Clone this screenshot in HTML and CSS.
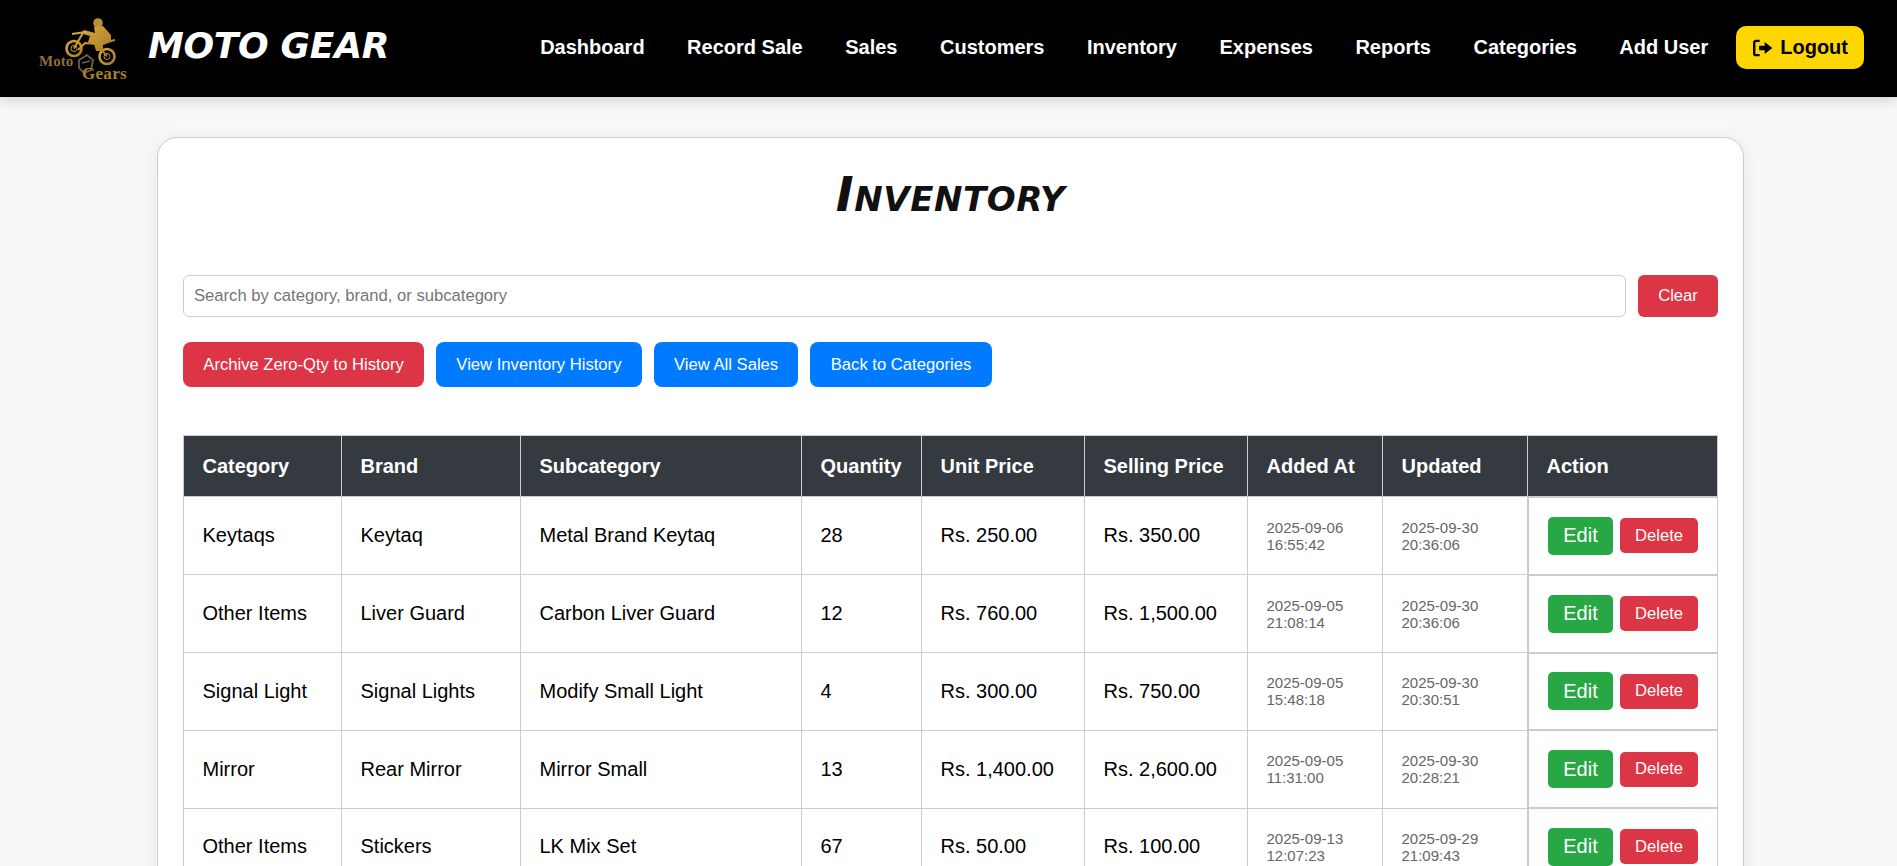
FILE: index.html
```html
<!DOCTYPE html>
<html lang="en">
<head>
<meta charset="utf-8">
<title>Inventory</title>
<link rel="stylesheet" href="styles.css">
</head>
<body>
<header class="topbar">
  <div class="brand">
    <svg class="logo" viewBox="0 0 100 70" width="100" height="70" aria-hidden="true">
      <defs>
        <linearGradient id="gold" x1="0" y1="0" x2="1" y2="1">
          <stop offset="0" stop-color="#d9a93c"/>
          <stop offset="1" stop-color="#a87c2a"/>
        </linearGradient>
      </defs>
      <g fill="none" stroke="url(#gold)">
        <circle cx="37" cy="34.5" r="7.5" stroke-width="2.6"/>
        <circle cx="70" cy="42.5" r="7.5" stroke-width="2.6"/>
        <circle cx="37" cy="34.5" r="3" stroke-width="1" />
        <circle cx="70" cy="42.5" r="3" stroke-width="1" />
        <path d="M37 34.5 L47 17 M35 20 L48 18 M70 42.5 L60 30 L48 29 L41 36 M60 30 L78 26" stroke-width="2"/>
      </g>
      <circle cx="61" cy="9" r="4.8" fill="#b98f3a"/>
      <path fill="url(#gold)" d="M57 13 L66 12 L74 21 L74 28 L66 31 L66 37 L59 37 L57 30 L51 28 L53 22 L46 20 L47 16 L58 19Z"/>
      <path fill="none" stroke="#6f5f44" stroke-width="1.8" d="M42 46 L50 41 L56 46 L54 56 L47 59 L42 54Z M45 49 L53 47"/>
      <text class="logo-moto" x="2" y="52">Moto</text>
      <text class="logo-gears" x="45" y="64.5">Gears</text>
    </svg>
    <span class="brand-name">MOTO GEAR</span>
  </div>
  <nav class="nav">
    <a href="#">Dashboard</a>
    <a href="#">Record Sale</a>
    <a href="#">Sales</a>
    <a href="#">Customers</a>
    <a href="#">Inventory</a>
    <a href="#">Expenses</a>
    <a href="#">Reports</a>
    <a href="#">Categories</a>
    <a href="#">Add User</a>
    <a href="#" class="logout">
      <svg viewBox="0 0 20 20" width="22" height="22" aria-hidden="true">
        <path class="icon-bracket" d="M7 3.5H3.6C2.7 3.5 2 4.2 2 5.1v9.8c0 .9.7 1.6 1.6 1.6H7"/>
        <path class="icon-arrow" d="M6.5 8h5V4.6L18.5 10l-7 5.4V12h-5z"/>
      </svg>
      Logout
    </a>
  </nav>
</header>

<main class="card">
  <h1 class="title">Inventory</h1>
  <div class="search-row">
    <input class="search" type="text" placeholder="Search by category, brand, or subcategory">
    <button class="btn btn-red btn-clear">Clear</button>
  </div>
  <div class="actions">
    <a href="#" class="btn btn-red btn-action">Archive Zero-Qty to History</a>
    <a href="#" class="btn btn-blue btn-action">View Inventory History</a>
    <a href="#" class="btn btn-blue btn-action">View All Sales</a>
    <a href="#" class="btn btn-blue btn-action">Back to Categories</a>
  </div>
  <table class="grid">
    <colgroup>
      <col class="c1"><col class="c2"><col class="c3"><col class="c4"><col class="c5"><col class="c6"><col class="c7"><col class="c8"><col class="c9">
    </colgroup>
    <thead>
      <tr><th>Category</th><th>Brand</th><th>Subcategory</th><th>Quantity</th><th>Unit Price</th><th>Selling Price</th><th>Added At</th><th>Updated</th><th>Action</th></tr>
    </thead>
    <tbody>
      <tr><td>Keytaqs</td><td>Keytaq</td><td>Metal Brand Keytaq</td><td>28</td><td>Rs. 250.00</td><td>Rs. 350.00</td><td class="date">2025-09-06<br>16:55:42</td><td class="date">2025-09-30<br>20:36:06</td><td class="act"><a href="#" class="edit">Edit</a><a href="#" class="del">Delete</a></td></tr>
      <tr><td>Other Items</td><td>Liver Guard</td><td>Carbon Liver Guard</td><td>12</td><td>Rs. 760.00</td><td>Rs. 1,500.00</td><td class="date">2025-09-05<br>21:08:14</td><td class="date">2025-09-30<br>20:36:06</td><td class="act"><a href="#" class="edit">Edit</a><a href="#" class="del">Delete</a></td></tr>
      <tr><td>Signal Light</td><td>Signal Lights</td><td>Modify Small Light</td><td>4</td><td>Rs. 300.00</td><td>Rs. 750.00</td><td class="date">2025-09-05<br>15:48:18</td><td class="date">2025-09-30<br>20:30:51</td><td class="act"><a href="#" class="edit">Edit</a><a href="#" class="del">Delete</a></td></tr>
      <tr><td>Mirror</td><td>Rear Mirror</td><td>Mirror Small</td><td>13</td><td>Rs. 1,400.00</td><td>Rs. 2,600.00</td><td class="date">2025-09-05<br>11:31:00</td><td class="date">2025-09-30<br>20:28:21</td><td class="act"><a href="#" class="edit">Edit</a><a href="#" class="del">Delete</a></td></tr>
      <tr><td>Other Items</td><td>Stickers</td><td>LK Mix Set</td><td>67</td><td>Rs. 50.00</td><td>Rs. 100.00</td><td class="date">2025-09-13<br>12:07:23</td><td class="date">2025-09-29<br>21:09:43</td><td class="act"><a href="#" class="edit">Edit</a><a href="#" class="del">Delete</a></td></tr>
    </tbody>
  </table>
</main>
</body>
</html>
```
FILE: styles.css
```css
* { box-sizing: border-box; }
html { height: 100%; overflow: hidden; }
body {
  margin: 0;
  height: 100%;
  overflow: hidden;
  background: #f8f8f8;
  color: #000;
  font-family: "Liberation Sans", Arial, sans-serif;
}
a { text-decoration: none; }

.topbar {
  height: 97px;
  background: #000;
  display: flex;
  align-items: center;
  justify-content: space-between;
  padding: 0 33px 2px 37px;
  box-shadow: 0 4px 12px rgba(0, 0, 0, 0.15);
}
.brand { display: flex; align-items: center; gap: 11px; margin-top: 2px; }
.logo { display: block; }
.logo-moto { font: bold 15px "Liberation Serif", serif; fill: #8f6f35; }
.logo-gears { font: bold 17px "Liberation Serif", serif; fill: #a8802f; letter-spacing: 0.3px; }
.brand-name {
  color: #fff;
  font-family: "DejaVu Sans", sans-serif;
  font-style: italic;
  font-weight: 700;
  font-size: 36px;
  letter-spacing: -0.3px;
  margin-top: -7px;
}
.nav { display: flex; align-items: center; gap: 42.5px; }
.nav a {
  color: #fff;
  font-size: 20px;
  font-weight: 700;
}
.nav a.logout {
  display: flex;
  align-items: center;
  gap: 6px;
  height: 43px;
  padding: 0 16px;
  margin-left: -14.5px;
  background: #ffd700;
  color: #000;
  border-radius: 10px;
}
.icon-bracket { fill: none; stroke: #000; stroke-width: 2.2; }
.icon-arrow { fill: #000; }

.card {
  width: 1587px;
  margin: 40px 0 0 157px;
  padding: 0 25px;
  height: 800px;
  background: #fff;
  border: 1px solid #ccc;
  border-radius: 20px;
  box-shadow: 0 4px 20px rgba(0, 0, 0, 0.08);
}
.title {
  margin: 29px 0 40px;
  height: 68px;
  text-align: center;
  font-family: "DejaVu Sans", sans-serif;
  font-style: italic;
  font-weight: 700;
  font-size: 48px;
  line-height: 54px;
  font-variant: small-caps;
  letter-spacing: 0.6px;
  color: #111;
}
.search-row { display: flex; gap: 12px; height: 42px; }
.search {
  flex: 1;
  min-width: 0;
  height: 42px;
  padding: 0 10px;
  border: 1px solid #ccc;
  border-radius: 6px;
  font: 16.64px "Liberation Sans", Arial, sans-serif;
  background: #fff;
}
.search::placeholder { color: #757575; }
.btn {
  border: 0;
  color: #fff;
  font: 16.64px "Liberation Sans", Arial, sans-serif;
  display: flex;
  align-items: center;
  border-radius: 6px;
}
.btn-red { background: #dc3545; }
.btn-blue { background: #007bff; }
.btn-clear { width: 80px; justify-content: center; }
.actions { display: flex; gap: 12px; margin: 25px 0 48px; }
.btn-action { height: 45px; padding: 0 20.3px; border-radius: 8px; }

.grid {
  width: 1534px;
  table-layout: fixed;
  border-collapse: collapse;
  font-size: 20px;
}
.c1 { width: 158px; }
.c2 { width: 179px; }
.c3 { width: 281px; }
.c4 { width: 120px; }
.c5 { width: 163px; }
.c6 { width: 163px; }
.c7 { width: 135px; }
.c8 { width: 145px; }
.c9 { width: 190px; }
.grid th, .grid td {
  border: 1px solid #ccc;
  padding: 0 18.5px;
  text-align: left;
  vertical-align: middle;
}
.grid th {
  height: 61px;
  background: #343a40;
  color: #fff;
  font-weight: 700;
}
.grid td { height: 77.75px; }
.grid td.date { font-size: 15px; line-height: 17px; color: #666; }
.grid td.act {
  display: flex;
  align-items: center;
  gap: 7px;
  padding: 0 18px 0 19px;
}
.edit {
  width: 65px;
  height: 38px;
  background: #28a745;
  color: #fff;
  border-radius: 5px;
  font-size: 20px;
  display: flex;
  align-items: center;
  justify-content: center;
}
.del {
  width: 78px;
  height: 35px;
  background: #dc3545;
  color: #fff;
  border-radius: 5px;
  font-size: 16.64px;
  display: flex;
  align-items: center;
  justify-content: center;
}
```
